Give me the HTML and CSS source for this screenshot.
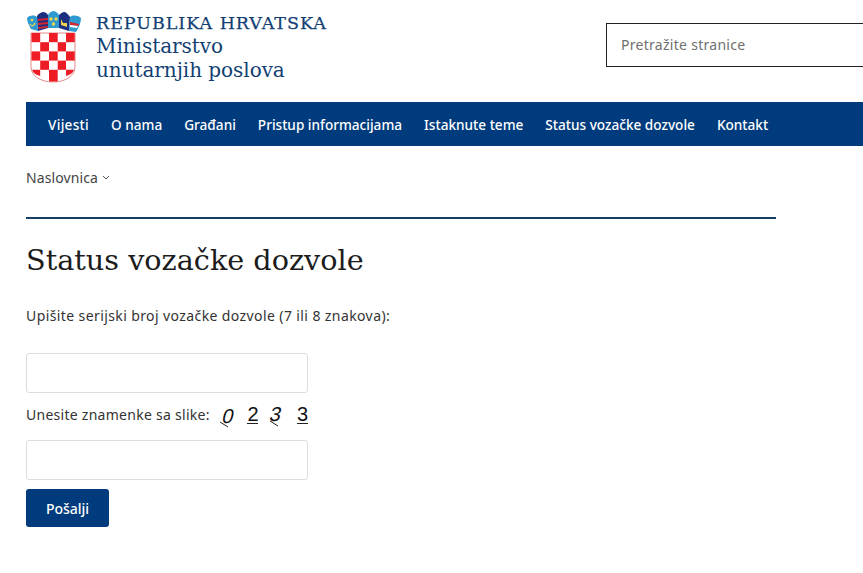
FILE: index.html
```html
<!DOCTYPE html>
<html lang="hr">
<head>
  <meta charset="UTF-8">
  <title>Status vozačke dozvole</title>
  <link rel="stylesheet" href="styles.css">
</head>
<body>

  <header class="top">
    <div class="logo">
      <svg class="grb" width="56" height="73" viewBox="0 0 56 73">
        <!-- kruna -->
        <path d="M1 8 C4 5 8 5 11 7 L12 21 L5 19 C3 15 1 12 1 8 Z" fill="#2f9ad0"/>
        <path d="M11 6 C13 3 16 2 17 2 C19 2 21 3 22 5 L22 18 L12 21 Z" fill="#1d2f7f"/>
        <path d="M12 9 L22 8 L22 10 L12 11 Z M12 13 L22 12 L22 14 L12 15 Z M12 17 L22 16 L22 17.500 L12 19 Z" fill="#d9232e"/>
        <path d="M22 5 C24 2 26 1 27.500 1 C29 1 31 2 33 5 L33 18 L22 18 Z" fill="#2f9ad0"/>
        <circle cx="25" cy="9" r="1.700" fill="#f2d64b"/>
        <circle cx="30" cy="9" r="1.700" fill="#f2d64b"/>
        <circle cx="27.500" cy="14" r="1.700" fill="#f2d64b"/>
        <path d="M33 5 C35 3 37 2 38 2 C40 2 42 4 44 7 L43 21 L33 18 Z" fill="#1d2f7f"/>
        <path d="M35 9 L37 13 L41 13 L41 17 L35 15 Z" fill="#f2d64b"/>
        <path d="M44 7 C47 5 51 5 55 8 C55 13 53 17 50 22 L43 21 Z" fill="#2f9ad0"/>
        <path d="M44 12 L53 14 L52 16 L44 15 Z" fill="#d9232e"/>
        <path d="M44 15 L52 16 L51 18 L44 17 Z" fill="#ffffff"/>
        <path d="M4 14 C6 17 8 16 9 13" fill="none" stroke="#f2d64b" stroke-width="1.200"/>
        <circle cx="6" cy="10" r="1.300" fill="#f2d64b"/>
        <!-- stit -->
        <path d="M5 23 H49 V57 C49 66 39 72 27 72 C15 72 5 66 5 57 Z" fill="#ffffff" stroke="#e58a8a" stroke-width="1"/>
        <g fill="#ee1c25">
          <rect x="5.500" y="23" width="8.700" height="9.200"/>
          <rect x="23" y="23" width="8.700" height="9.200"/>
          <rect x="40" y="23" width="8.700" height="9.200"/>
          <rect x="14.200" y="32.200" width="8.800" height="9.200"/>
          <rect x="31.700" y="32.200" width="8.300" height="9.200"/>
          <rect x="5.500" y="41.400" width="8.700" height="9.200"/>
          <rect x="23" y="41.400" width="8.700" height="9.200"/>
          <rect x="40" y="41.400" width="8.700" height="9.200"/>
          <rect x="14.200" y="50.600" width="8.800" height="9.200"/>
          <rect x="31.700" y="50.600" width="8.300" height="9.200"/>
          <path d="M6 59.800 H14.200 V66 C10 65 7 63 6 59.800 Z"/>
          <rect x="23" y="59.800" width="8.700" height="11.700"/>
          <path d="M40 59.800 H48 C47 63 44 65 40 66 Z"/>
        </g>
      </svg>
      <div class="logo-text">
        <div class="logo-state">REPUBLIKA HRVATSKA</div>
        <div class="logo-name">Ministarstvo<br>unutarnjih poslova</div>
      </div>
    </div>
    <div class="search">Pretražite stranice</div>
  </header>

  <nav class="menu">
    <a href="#">Vijesti</a>
    <a href="#">O nama</a>
    <a href="#">Građani</a>
    <a href="#">Pristup informacijama</a>
    <a href="#">Istaknute teme</a>
    <a href="#">Status vozačke dozvole</a>
    <a href="#">Kontakt</a>
  </nav>

  <div class="crumbs">
    Naslovnica
    <svg width="8" height="6" viewBox="0 0 8 6"><path d="M1 1 L4 4 L7 1" fill="none" stroke="#555" stroke-width="1"/></svg>
  </div>

  <main class="content">
    <h1>Status vozačke dozvole</h1>
    <p class="intro">Upišite serijski broj vozačke dozvole (7 ili 8 znakova):</p>

    <form>
      <input type="text" class="field">
      <div class="captcha-row">
        <label>Unesite znamenke sa slike:</label>
        <svg class="captcha" width="92" height="28" viewBox="0 0 92 28">
          <text x="3" y="20" transform="skewX(-14) translate(5 0)">0</text>
          <path d="M2 19 L10 24" />
          <text x="29.500" y="18">2</text>
          <path d="M29 20.500 H40" />
          <text x="50" y="18" transform="skewX(-14) translate(5 0)">3</text>
          <path d="M52 18 L60 23" />
          <text x="79" y="18">3</text>
          <path d="M79 20.500 H90" />
        </svg>
      </div>
      <input type="text" class="field">
      <button type="button">Pošalji</button>
    </form>
  </main>

</body>
</html>
```

FILE: styles.css
```css
html, body {
  overflow: hidden;
}

body {
  margin: 0;
  font-family: "Noto Sans", sans-serif;
  font-size: 14px;
  color: #333;
  background-color: #fff;
  padding-left: 26px;
}

.top {
  display: flex;
  justify-content: space-between;
  height: 102px;
}

.logo {
  display: flex;
  padding-top: 10px;
}

.grb {
  display: block;
}

.logo-text {
  margin-left: 14px;
  padding-top: 3px;
  font-family: "DejaVu Serif", serif;
  color: #123f73;
}

.logo-state {
  font-size: 17.500px;
  line-height: 21px;
  letter-spacing: 0.95px;
  -webkit-text-stroke: 0.25px #123f73;
}

.logo-name {
  font-size: 20px;
  line-height: 24px;
  letter-spacing: -0.05px;
}

.search {
  width: 300px;
  height: 44px;
  flex: none;
  box-sizing: border-box;
  margin-top: 23px;
  margin-right: -43px;
  padding-left: 14px;
  border: 1px solid #222;
  line-height: 42px;
  letter-spacing: 0.28px;
  color: #6f6f6f;
}

.menu {
  display: flex;
  gap: 22px;
  height: 44px;
  padding-left: 22px;
  background-color: #003c7d;
  line-height: 46px;
}

.menu a {
  color: #fff;
  font-size: 13.600px;
  font-weight: 500;
  text-decoration: none;
}

.menu a:first-child {
  letter-spacing: 0.3px;
}

.crumbs {
  display: flex;
  align-items: center;
  gap: 4px;
  margin-top: 22px;
  line-height: 20px;
  letter-spacing: 0.1px;
  color: #444;
}

.content {
  width: 750px;
  margin-top: 29px;
  border-top: 2px solid #123f63;
}

h1 {
  margin: 21px 0 0;
  font-family: "DejaVu Serif", serif;
  font-size: 28.700px;
  font-weight: 400;
  line-height: 40px;
  color: #1c1c1c;
}

.intro {
  margin: 26px 0 0;
  line-height: 20px;
  letter-spacing: 0.4px;
}

form {
  margin-top: 27px;
}

.field {
  display: block;
  width: 282px;
  height: 40px;
  box-sizing: border-box;
  border: 1px solid #ddd;
  border-radius: 3px;
  background: #fff;
}

.captcha-row {
  display: flex;
  align-items: center;
  height: 47px;
}

.captcha-row label {
  padding-bottom: 4px;
  letter-spacing: 0.27px;
}

.captcha {
  display: block;
  margin-left: 8px;
}

.captcha text {
  font-family: "Liberation Sans", sans-serif;
  font-size: 20px;
  fill: #111;
}

.captcha path {
  fill: none;
  stroke: #222;
  stroke-width: 1;
}

button {
  display: block;
  width: 83px;
  height: 38px;
  margin-top: 9px;
  border: none;
  border-radius: 3px;
  background-color: #003c7d;
  color: #fff;
  font-family: "Noto Sans", sans-serif;
  font-size: 14px;
  font-weight: 500;
}
```
